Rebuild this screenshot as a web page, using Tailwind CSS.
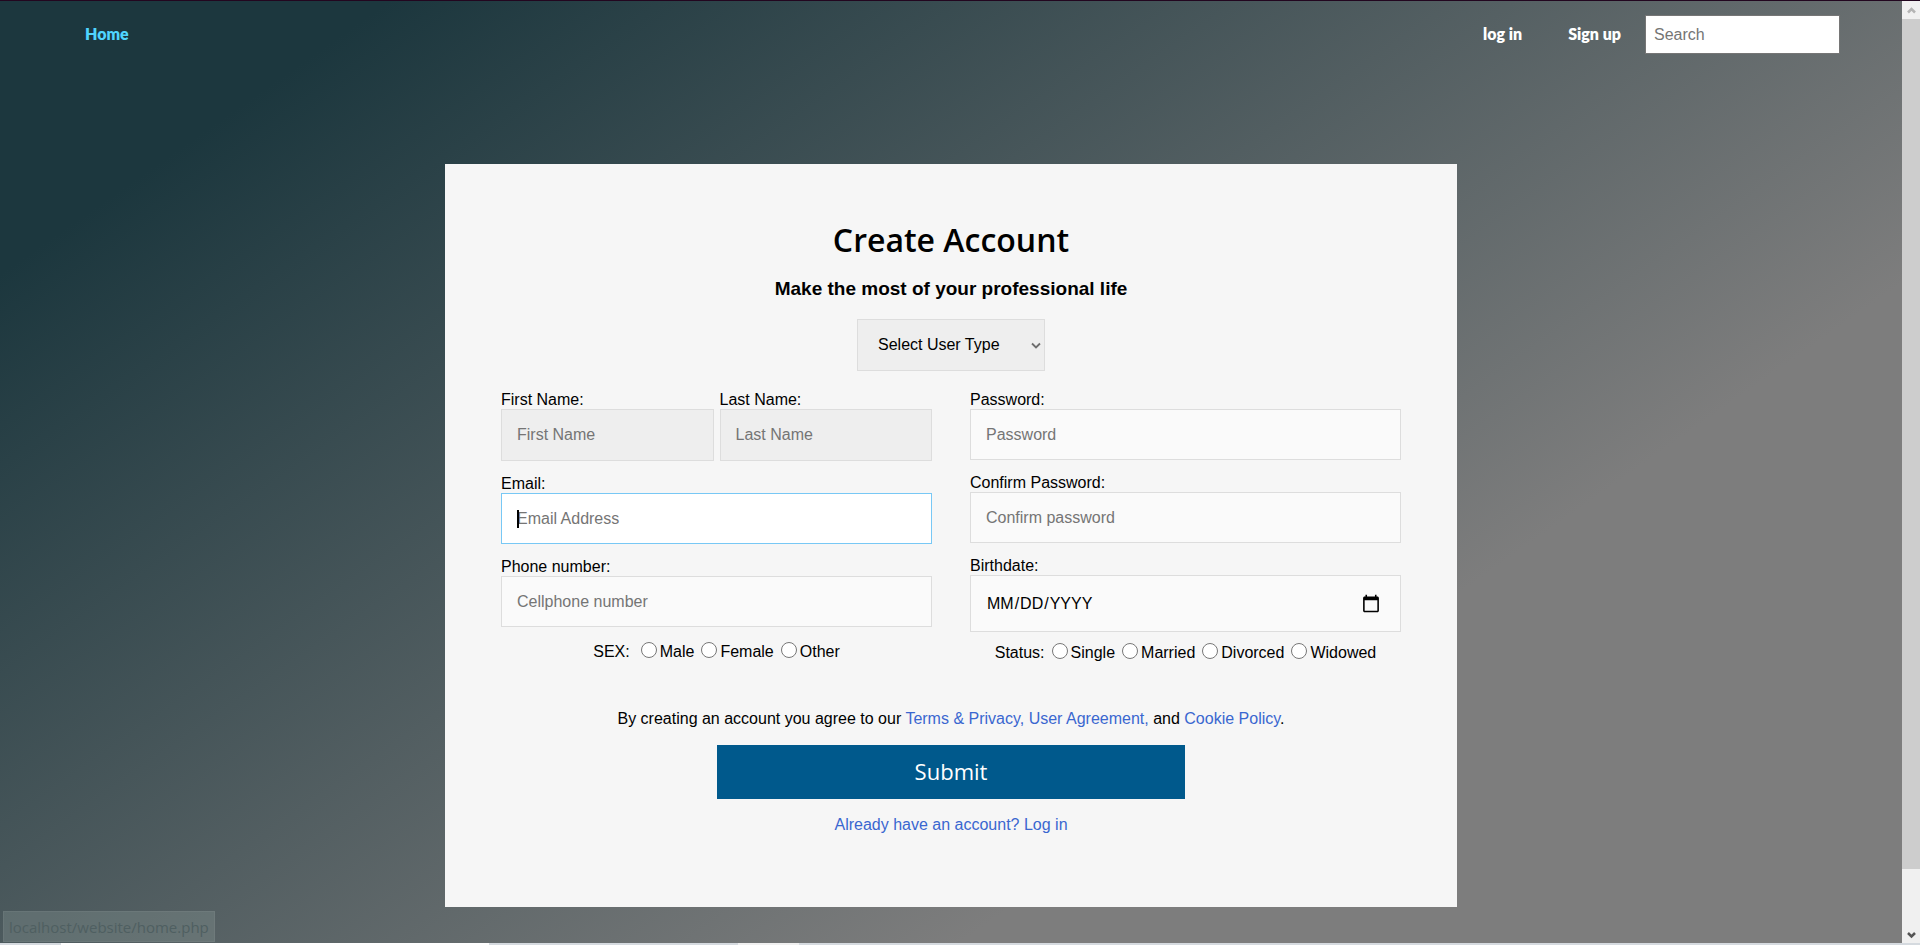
<!DOCTYPE html>
<html lang="en">
<head>
<meta charset="utf-8">
<title>Create Account</title>
<script src="https://cdn.jsdelivr.net/npm/@tailwindcss/browser@4"></script>
</head>
<body class="flex min-h-screen flex-col bg-[#d5dadf] font-['Liberation_Sans',Arial,sans-serif] text-base leading-[18px] text-black">
<div class="h-px bg-[#22061f]"></div>
<div class="flex flex-1">
  <main class="relative flex-1 bg-[linear-gradient(145deg,#1c373e_12%,#7d7d7d_71%)]">
    <header class="flex items-start justify-between pt-3.5 pr-[62px] pl-[85px]">
      <nav class="flex h-[39px] items-center pb-0.5 font-['Lato',sans-serif] text-base font-extrabold">
        <a href="#" class="text-[#4fd5ff]">Home</a>
      </nav>
      <div class="flex h-[39px] items-center font-['Lato',sans-serif] text-base font-extrabold text-white">
        <a href="#" class="mr-[46px] pb-0.5">log in</a>
        <a href="#" class="mr-6 pb-0.5">Sign up</a>
        <input type="search" aria-label="Search" placeholder="Search" class="h-[39px] w-[195px] border border-[#767676] bg-white px-2 font-['Liberation_Sans',sans-serif] font-normal text-black placeholder:text-[#757575]">
      </div>
    </header>

    <form class="mx-auto mt-[110px] mb-9 flex max-w-[1012px] flex-col items-center bg-[#f6f6f6] px-14 pt-14 pb-[73px]">
      <h1 class="font-['Open_Sans',sans-serif] text-[32px] leading-10 font-semibold">Create Account</h1>
      <h2 class="mt-[18px] text-[19px] leading-[22px] font-bold">Make the most of your professional life</h2>
      <div class="relative mt-[19px]">
        <select aria-label="User type" class="block h-[52px] w-[188px] appearance-none border border-[#dddddd] bg-[#eeeeee] pl-5">
          <option>Select User Type</option>
        </select>
        <svg class="pointer-events-none absolute top-[23px] right-1 h-2 w-2.5" viewBox="0 0 10 8" fill="none" stroke="#6e6e6e" stroke-width="1.800"><path d="M1 1.500 5 5.500 9 1.500"/></svg>
      </div>

      <div class="mt-5 grid w-full grid-cols-2 gap-[38px]">
        <div>
          <div class="grid grid-cols-2 gap-1.5">
            <label>First Name:
              <input type="text" placeholder="First Name" class="block h-[52px] w-full border border-[#dddddd] bg-[#eeeeee] px-[15px] placeholder:text-[#757575]">
            </label>
            <label>Last Name:
              <input type="text" placeholder="Last Name" class="block h-[52px] w-full border border-[#dddddd] bg-[#eeeeee] px-[15px] placeholder:text-[#757575]">
            </label>
          </div>
          <label class="relative mt-3.5 block">Email:
            <input type="email" placeholder="Email Address" class="block h-[51px] w-full border border-[#78c8f5] bg-white px-[15px] outline-none placeholder:text-[#757575]">
            <span class="absolute bottom-4 left-4 h-[18px] w-0.5 bg-black"></span>
          </label>
          <label class="mt-3.5 block">Phone number:
            <input type="tel" placeholder="Cellphone number" class="block h-[51px] w-full border border-[#dddddd] bg-[#fafafa] px-[15px] placeholder:text-[#757575]">
          </label>
          <fieldset class="mt-[15px] flex items-center justify-center gap-[7px]">
            <span class="mr-1">SEX:</span>
            <label class="flex items-center gap-[3px]"><input type="radio" name="sex" class="mb-1 size-4">Male</label>
            <label class="flex items-center gap-[3px]"><input type="radio" name="sex" class="mb-1 size-4">Female</label>
            <label class="flex items-center gap-[3px]"><input type="radio" name="sex" class="mb-1 size-4">Other</label>
          </fieldset>
        </div>
        <div>
          <label class="block">Password:
            <input type="password" placeholder="Password" class="block h-[51px] w-full border border-[#dddddd] bg-[#fafafa] px-[15px] placeholder:text-[#757575]">
          </label>
          <label class="mt-3.5 block">Confirm Password:
            <input type="password" placeholder="Confirm password" class="block h-[51px] w-full border border-[#dddddd] bg-[#fafafa] px-[15px] placeholder:text-[#757575]">
          </label>
          <label class="mt-3.5 block">Birthdate:
            <input type="date" class="block h-[57px] w-full border border-[#dddddd] bg-[#fafafa] px-[15px] uppercase [&::-webkit-calendar-picker-indicator]:mr-0.5 [&::-webkit-calendar-picker-indicator]:size-5">
          </label>
          <fieldset class="mt-[11px] flex items-center justify-center gap-[7px]">
            <span>Status:</span>
            <label class="flex items-center gap-[3px]"><input type="radio" name="status" class="mb-1 size-4">Single</label>
            <label class="flex items-center gap-[3px]"><input type="radio" name="status" class="mb-1 size-4">Married</label>
            <label class="flex items-center gap-[3px]"><input type="radio" name="status" class="mb-1 size-4">Divorced</label>
            <label class="flex items-center gap-[3px]"><input type="radio" name="status" class="mb-1 size-4">Widowed</label>
          </fieldset>
        </div>
      </div>

      <p class="mt-[47px]">By creating an account you agree to our <a href="#" class="text-[#3a67d0]">Terms &amp; Privacy,</a> <a href="#" class="text-[#3a67d0]">User Agreement,</a> and <a href="#" class="text-[#3a67d0]">Cookie Policy</a>.</p>
      <button type="submit" class="mt-[17px] h-[54px] w-[468px] bg-[#00598c] pb-0.5 font-['Open_Sans',sans-serif] text-[22px] font-medium text-white">Submit</button>
      <a href="#" class="mt-[17px] text-[#3a67d0]">Already have an account? Log in</a>
    </form>

    <div class="absolute bottom-px left-[3px] flex h-[31px] items-center border border-white/5 bg-[#8fa09c]/30 px-[5px] font-['Open_Sans',sans-serif] text-[15px] text-[#4f5f61]">localhost/website/home.php</div>
  </main>

  <div class="flex w-[18px] flex-col items-center bg-[#f0f0f0]">
    <svg class="h-[18px] w-[18px]" viewBox="0 0 18 18" fill="none" stroke="#b4b4b4" stroke-width="2.500"><path d="M6 11.500 9.500 8 13 11.500"/></svg>
    <div class="h-[850px] w-full bg-[#cdcdcd]"></div>
    <svg class="mt-auto h-[18px] w-[18px]" viewBox="0 0 18 18" fill="none" stroke="#555555" stroke-width="2.500"><path d="M6 8 9.500 11.500 13 8"/></svg>
  </div>
</div>
<div class="flex h-0.5 bg-[#d5dadf]">
  <div class="ml-[61px] h-full w-[428px] bg-white"></div>
  <div class="ml-[249px] h-full w-[61px] bg-[#f0f0f0]"></div>
</div>
</body>
</html>
